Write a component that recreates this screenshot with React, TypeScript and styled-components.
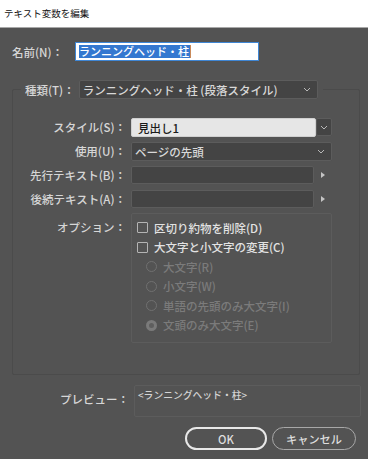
import React from "react";
import styled, { createGlobalStyle } from "styled-components";

const GlobalStyle = createGlobalStyle`
  *, *:before, *:after {
    box-sizing: border-box;
  }
  html, body {
    margin: 0;
    padding: 0;
    background: #535353;
    font-family: "Noto Sans CJK JP", "Noto Sans", sans-serif;
  }
`;

const Dialog = styled.div`
  width: 368px;
  height: 459px;
  background: #535353;
  color: #d6d6d6;
  font-size: 11.5px;
  font-weight: 500;
  overflow: hidden;
`;

const TitleBar = styled.div`
  height: 28px;
  background: #ffffff;
  border-bottom: 1px solid #a8a8a8;
  display: flex;
  align-items: center;
  padding: 0 0 2px 4px;
  font-size: 9.5px;
  font-weight: 400;
  color: #111111;
`;

const Body = styled.div`
  padding: 14px 7px 0 12px;
`;

const NameRow = styled.div`
  display: flex;
  align-items: center;
  height: 19px;
`;

const NameLabel = styled.span`
  width: 63px;
  white-space: nowrap;
`;

const NameInput = styled.div`
  width: 184px;
  height: 19px;
  background: #ffffff;
  border: 1px solid #3f86d4;
  display: flex;
  align-items: center;
  padding-left: 3px;
`;

const Selected = styled.span`
  background: #3478d0;
  color: #ffffff;
  font-size: 11px;
  line-height: 13px;
  padding-right: 1px;
  border-right: 1px solid #c98a5a;
`;

const Group = styled.fieldset`
  margin: 18px 0 0 0;
  padding: 18px 0 31px 0;
  width: 348px;
  border: 1px solid #4b4b4b;
  border-radius: 2px;
  min-width: 0;
`;

const Legend = styled.legend`
  margin-left: 8px;
  padding: 1px 5px 1px 4px;
  display: flex;
  align-items: center;
  gap: 4px;
`;

const Select = styled.div<{ width: number; light?: boolean; pad?: number }>`
  width: ${(p) => p.width}px;
  height: 19px;
  background: ${(p) => (p.light ? "#e6e6e6" : "#444444")};
  color: ${(p) => (p.light ? "#1a1a1a" : "#d8d8d8")};
  border: 1px solid ${(p) => (p.light ? "#d0d0d0" : "#5c5c5c")};
  border-radius: 2px;
  display: flex;
  align-items: center;
  justify-content: space-between;
  padding: 0 6px 0 ${(p) => p.pad ?? 3}px;
  white-space: nowrap;
`;

const FormGrid = styled.div`
  display: grid;
  grid-template-columns: 113px 201px;
  column-gap: 5px;
  row-gap: 6px;
`;

const Label = styled.span<{ top?: number }>`
  text-align: right;
  white-space: nowrap;
  align-self: ${(p) => (p.top ? "start" : "center")};
  padding-top: ${(p) => p.top ?? 0}px;
`;

const FieldCell = styled.div`
  display: flex;
  height: 18px;
`;

const ChevronBox = styled.div`
  width: 16px;
  height: 18px;
  background: #444444;
  border: 1px solid #5c5c5c;
  border-radius: 2px;
  display: flex;
  align-items: center;
  justify-content: center;
`;

const TextField = styled.div`
  width: 183px;
  height: 18px;
  background: #444444;
  border: 1px solid #5c5c5c;
  border-radius: 2px;
`;

const ArrowCell = styled.div`
  flex: 1;
  display: flex;
  align-items: center;
  justify-content: center;
`;

const Arrow = styled.span`
  width: 0;
  height: 0;
  border-top: 3.5px solid transparent;
  border-bottom: 3.5px solid transparent;
  border-left: 4px solid #c4c4c4;
`;

const OptionsBox = styled.div`
  width: 201px;
  height: 130px;
  border: 1px solid #5c5c5c;
  border-radius: 2px;
  padding: 4px 0 0 5px;
  margin-top: -1px;
`;

const OptionRow = styled.div<{ indent?: boolean; disabled?: boolean }>`
  height: 19.5px;
  display: flex;
  align-items: center;
  gap: 6px;
  padding-left: ${(p) => (p.indent ? 9 : 0)}px;
  color: ${(p) => (p.disabled ? "#7b7b7b" : "#e2e2e2")};
  white-space: nowrap;
`;

const Check = styled.span`
  width: 11px;
  height: 11px;
  border: 1px solid #b4b4b4;
  border-radius: 1px;
`;

const Radio = styled.span<{ checked?: boolean }>`
  width: 11px;
  height: 11px;
  border-radius: 50%;
  border: ${(p) => (p.checked ? "3px solid #7a7a7a" : "1px solid #707070")};
  background: ${(p) => (p.checked ? "#5e5e5e" : "transparent")};
`;

const PreviewRow = styled.div`
  margin-top: 10px;
  display: flex;
  gap: 5px;
`;

const PreviewLabel = styled.span`
  width: 117px;
  text-align: right;
  padding-top: 6px;
  white-space: nowrap;
`;

const PreviewBox = styled.div`
  width: 227px;
  height: 32px;
  border: 1px solid #5c5c5c;
  border-radius: 2px;
  padding: 2px 0 0 3px;
  font-size: 9.8px;
  color: #d4d4d4;
`;

const ButtonRow = styled.div`
  margin-top: 10px;
  padding-right: 5px;
  display: flex;
  justify-content: flex-end;
  gap: 5px;
`;

const Button = styled.div<{ primary?: boolean; width: number }>`
  width: ${(p) => p.width}px;
  height: 23px;
  border-radius: 12px;
  border: ${(p) => (p.primary ? "2px solid #e8e8e8" : "1px solid #a8a8a8")};
  display: flex;
  align-items: center;
  justify-content: center;
  color: #dedede;
  font-size: 11.2px;
`;

function Chevron() {
  return (
    <svg width="8" height="5" viewBox="0 0 8 5">
      <path d="M1 1 L4 4 L7 1" fill="none" stroke="#b8b8b8" strokeWidth="1" />
    </svg>
  );
}

const options = [
  { text: "大文字(R)" },
  { text: "小文字(W)" },
  { text: "単語の先頭のみ大文字(I)" },
  { text: "文頭のみ大文字(E)", checked: true },
];

function App() {
  return (
    <Dialog>
      <GlobalStyle />
      <TitleBar>テキスト変数を編集</TitleBar>
      <Body>
        <NameRow>
          <NameLabel>名前(N)：</NameLabel>
          <NameInput>
            <Selected>ランニングヘッド・柱</Selected>
          </NameInput>
        </NameRow>

        <Group>
          <Legend>
            <span>種類(T)：</span>
            <Select width={239}>
              <span>ランニングヘッド・柱 (段落スタイル)</span>
              <Chevron />
            </Select>
          </Legend>

          <FormGrid>
            <Label>スタイル(S)：</Label>
            <FieldCell>
              <Select width={185} light pad={6}>
                <span>見出し1</span>
              </Select>
              <ChevronBox>
                <Chevron />
              </ChevronBox>
            </FieldCell>

            <Label>使用(U)：</Label>
            <FieldCell>
              <Select width={201}>
                <span>ページの先頭</span>
                <Chevron />
              </Select>
            </FieldCell>

            <Label>先行テキスト(B)：</Label>
            <FieldCell>
              <TextField />
              <ArrowCell>
                <Arrow />
              </ArrowCell>
            </FieldCell>

            <Label>後続テキスト(A)：</Label>
            <FieldCell>
              <TextField />
              <ArrowCell>
                <Arrow />
              </ArrowCell>
            </FieldCell>

            <Label top={5}>オプション：</Label>
            <OptionsBox>
              <OptionRow>
                <Check />
                区切り約物を削除(D)
              </OptionRow>
              <OptionRow>
                <Check />
                大文字と小文字の変更(C)
              </OptionRow>
              {options.map((o) => (
                <OptionRow key={o.text} indent disabled>
                  <Radio checked={o.checked} />
                  {o.text}
                </OptionRow>
              ))}
            </OptionsBox>
          </FormGrid>
        </Group>

        <PreviewRow>
          <PreviewLabel>プレビュー：</PreviewLabel>
          <PreviewBox>&lt;ランニングヘッド・柱&gt;</PreviewBox>
        </PreviewRow>

        <ButtonRow>
          <Button primary width={82}>
            OK
          </Button>
          <Button width={84}>キャンセル</Button>
        </ButtonRow>
      </Body>
    </Dialog>
  );
}

export default App;
